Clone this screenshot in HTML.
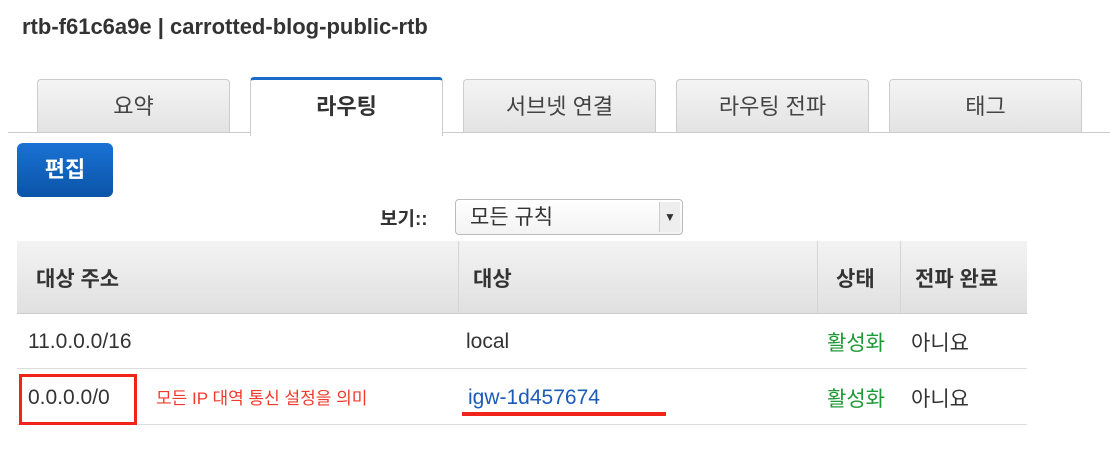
<!DOCTYPE html>
<html><head><meta charset="utf-8"><style>
body{margin:0;width:1110px;height:464px;background:#fff;font-family:"Liberation Sans","Noto Sans CJK KR",sans-serif;color:#333;position:relative;overflow:hidden}
.a{position:absolute}
.title{left:22px;top:14px;font-size:22px;font-weight:bold;color:#333}
.tab{top:79px;width:191px;height:52px;border:1px solid #ccc;border-bottom:none;border-radius:4px 4px 0 0;background:linear-gradient(#f4f4f4,#e3e3e3);font-size:22px;text-align:center;line-height:54px;color:#444}
.tab.on{background:#fff;border-top:3px solid #1a6cc8;top:77px;height:56px;font-weight:bold;color:#333;z-index:2}
.line{left:8px;top:132px;width:1102px;height:1px;background:#ccc}
.btn{left:17px;top:143px;width:96px;height:54px;border-radius:6px;background:linear-gradient(#1a72d4,#0a54a8);color:#fff;font-weight:bold;font-size:22px;text-align:center;line-height:54px}
.sel{left:455px;top:199px;width:228px;height:36px;border:1px solid #bbb;border-radius:4px;background:linear-gradient(#fff,#f3f3f3);font-size:21px;line-height:35px;box-sizing:border-box;padding-left:14px}
.arr{right:2px;top:2px;width:20px;height:30px;background:#eee;border-left:1px solid #ccc;font-size:12px;text-align:center;line-height:30px}
.hd{left:17px;top:241px;width:1010px;height:72px;background:linear-gradient(#f3f3f3,#e0e0e0);border-bottom:1px solid #ccc}
.v{width:1px;background:#d5d5d5;top:241px;height:72px}
.h{left:17px;width:1010px;height:1px;background:#ddd}
.t{font-size:21px}
.hb{font-weight:bold;font-size:21px;top:263px}
</style></head><body>
<div class="a title">rtb-f61c6a9e | carrotted-blog-public-rtb</div>
<div class="a line"></div>
<div class="a tab" style="left:37px">요약</div>
<div class="a tab on" style="left:250px">라우팅</div>
<div class="a tab" style="left:463px">서브넷 연결</div>
<div class="a tab" style="left:676px">라우팅 전파</div>
<div class="a tab" style="left:889px">태그</div>
<div class="a btn">편집</div>
<div class="a" style="left:380px;top:204px;font-size:19px;font-weight:bold">보기::</div>
<div class="a sel">모든 규칙<div class="a arr">▼</div></div>
<div class="a hd"></div>
<div class="a v" style="left:458px"></div>
<div class="a v" style="left:817px"></div>
<div class="a v" style="left:900px"></div>
<div class="a hb" style="left:36px">대상 주소</div>
<div class="a hb" style="left:473px">대상</div>
<div class="a hb" style="left:836px">상태</div>
<div class="a hb" style="left:915px">전파 완료</div>
<div class="a h" style="top:368px"></div>
<div class="a h" style="top:424px"></div>
<div class="a t" style="left:28px;top:330px">11.0.0.0/16</div>
<div class="a t" style="left:466px;top:330px">local</div>
<div class="a t" style="left:827px;top:327px;color:#1e9a38">활성화</div>
<div class="a t" style="left:911px;top:327px">아니요</div>
<div class="a" style="left:19px;top:374px;width:112px;height:45px;border:3px solid #f02418"></div>
<div class="a t" style="left:28px;top:386px">0.0.0.0/0</div>
<div class="a" style="left:156px;top:384px;font-size:17px;color:#f03a2c">모든 IP 대역 통신 설정을 의미</div>
<div class="a t" style="left:468px;top:386px;color:#1a5cb8">igw-1d457674</div>
<div class="a" style="left:462px;top:412px;width:204px;height:4px;background:#f02418"></div>
<div class="a t" style="left:827px;top:383px;color:#1e9a38">활성화</div>
<div class="a t" style="left:911px;top:383px">아니요</div>
</body></html>
